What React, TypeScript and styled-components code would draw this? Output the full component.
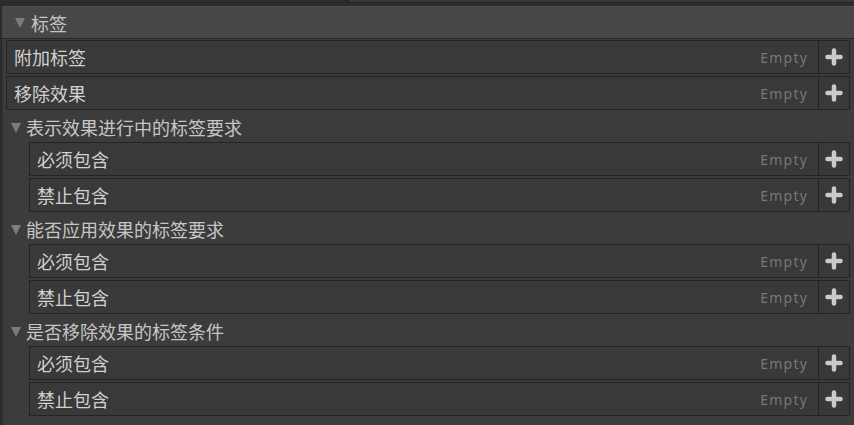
import React from 'react';
import styled, {createGlobalStyle} from 'styled-components';

const GlobalStyle = createGlobalStyle`
  html, body {
    margin: 0;
    padding: 0;
    background: #2c2c2c;
  }
  body {
    font-family: "Noto Sans CJK SC", "Noto Sans", sans-serif;
    overflow: hidden;
  }
`;

const Page = styled.div`
  width: 854px;
  height: 425px;
  display: flex;
  flex-direction: column;
  background: #2c2c2c;
`;

const TopStrip = styled.div`
  height: 6px;
  display: flex;
  justify-content: flex-end;
  align-items: flex-start;
`;

const TopTab = styled.div`
  width: 506px;
  height: 2px;
  background: #383838;
  border-bottom: 1px solid #242424;
  border-left: 1px solid #242424;
  border-bottom-left-radius: 5px;
`;

const Panel = styled.div`
  flex: 1;
  display: flex;
  flex-direction: column;
  margin-left: 1px;
  background: #3c3c3c;
  border-left: 1px solid #2a2a2a;
`;

const MainHeader = styled.div`
  height: 31px;
  display: flex;
  align-items: center;
  padding-left: 13px;
  gap: 6px;
  background: #474747;
  border-top: 1px solid #4f4f4f;
  border-bottom: 1px solid #262626;
  color: #c4c4c4;
  font-size: 18px;
`;

const Triangle = styled.span`
  width: 0;
  height: 0;
  border-left: 5.5px solid transparent;
  border-right: 5.5px solid transparent;
  border-top: 10px solid #7c7c7c;
  margin-top: 1px;
`;

const Body = styled.div`
  flex: 1;
  display: flex;
  flex-direction: column;
  padding: 1px 4px 0 3px;
  border-left: 1px solid #333;
`;

const List = styled.div<{$indent?: number}>`
  display: flex;
  flex-direction: column;
  gap: 2px;
  padding-left: ${({$indent}) => $indent ?? 0}px;
`;

const Row = styled.div`
  height: 34px;
  display: flex;
`;

const Field = styled.div`
  flex: 1;
  display: flex;
  align-items: center;
  justify-content: space-between;
  padding: 0 10px 0 7px;
  background: #393939;
  border: 1.5px solid #242424;
  color: #d0d0d0;
  font-size: 18px;
`;

const EmptyLabel = styled.span`
  font-family: "Noto Sans", sans-serif;
  font-size: 14px;
  letter-spacing: 1.2px;
  color: #777;
`;

const AddButton = styled.div`
  width: 30px;
  display: flex;
  align-items: center;
  justify-content: center;
  background: #393939;
  border: 1.5px solid #242424;
  border-left: none;
`;

const SubHeader = styled.div`
  height: 30px;
  display: flex;
  align-items: center;
  gap: 5px;
  padding-left: 5px;
  margin-top: 2px;
  color: #c6c6c6;
  font-size: 18px;
`;

const Plus = () => (
  <svg width="18" height="18" viewBox="0 0 18 18">
    <path d="M9 2.5 V15.5 M2.5 9 H15.5" stroke="#cacaca" strokeWidth="4.5" strokeLinecap="round" />
  </svg>
);

const TagRow = ({label}: {label: string}) => (
  <Row>
    <Field>
      <span>{label}</span>
      <EmptyLabel>Empty</EmptyLabel>
    </Field>
    <AddButton>
      <Plus />
    </AddButton>
  </Row>
);

const groups = [
  '表示效果进行中的标签要求',
  '能否应用效果的标签要求',
  '是否移除效果的标签条件',
];

export default function App() {
  return (
    <Page>
      <GlobalStyle />
      <TopStrip>
        <TopTab />
      </TopStrip>
      <Panel>
        <MainHeader>
          <Triangle />
          <span>标签</span>
        </MainHeader>
        <Body>
          <List>
            <TagRow label="附加标签" />
            <TagRow label="移除效果" />
          </List>
          {groups.map((g) => (
            <React.Fragment key={g}>
              <SubHeader>
                <Triangle />
                <span>{g}</span>
              </SubHeader>
              <List $indent={23}>
                <TagRow label="必须包含" />
                <TagRow label="禁止包含" />
              </List>
            </React.Fragment>
          ))}
        </Body>
      </Panel>
    </Page>
  );
}
